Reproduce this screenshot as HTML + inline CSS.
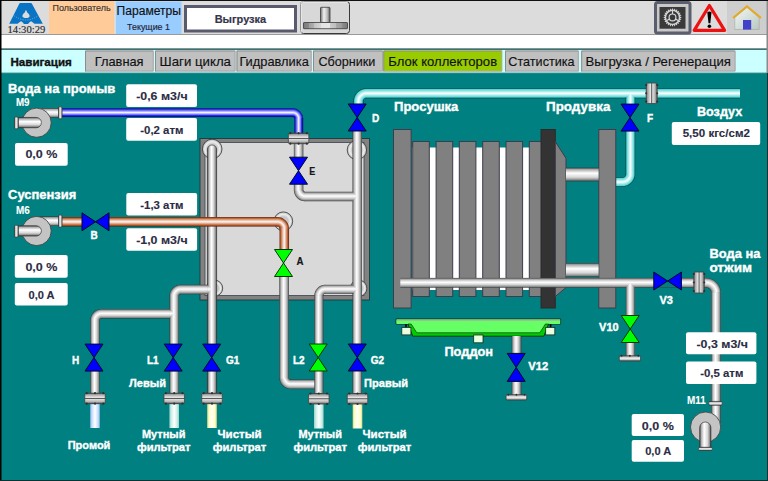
<!DOCTYPE html>
<html><head><meta charset="utf-8"><style>
html,body{margin:0;padding:0;width:768px;height:481px;overflow:hidden;background:#008080;}
svg{display:block;}

</style></head><body>
<svg width="768" height="481" viewBox="0 0 768 481" shape-rendering="geometricPrecision">
<defs><linearGradient id="cyl" x1="0" y1="0" x2="1" y2="0"><stop offset="0" stop-color="#707070"/><stop offset="0.35" stop-color="#f0f0f0"/><stop offset="0.7" stop-color="#c0c0c0"/><stop offset="1" stop-color="#606060"/></linearGradient><linearGradient id="base" x1="0" y1="0" x2="1" y2="0"><stop offset="0" stop-color="#7a7a7a"/><stop offset="0.12" stop-color="#8a8a8a"/><stop offset="0.12" stop-color="#a0a0a0"/><stop offset="0.25" stop-color="#b0b0b0"/><stop offset="0.25" stop-color="#c4c4c4"/><stop offset="0.4" stop-color="#d8d8d8"/><stop offset="0.4" stop-color="#e4e4e4"/><stop offset="0.6" stop-color="#e8e8e8"/><stop offset="0.6" stop-color="#cccccc"/><stop offset="0.75" stop-color="#bcbcbc"/><stop offset="0.75" stop-color="#a8a8a8"/><stop offset="0.88" stop-color="#9a9a9a"/><stop offset="0.88" stop-color="#8c8c8c"/><stop offset="1" stop-color="#7a7a7a"/></linearGradient><linearGradient id="house" x1="0" y1="0" x2="1" y2="1"><stop offset="0" stop-color="#f4f8f4"/><stop offset="1" stop-color="#b8c8c0"/></linearGradient><radialGradient id="g1" cx="0.5" cy="0.5" r="0.5"><stop offset="0.5" stop-color="#c8c8c8"/><stop offset="0.75" stop-color="#eeeeee"/><stop offset="1" stop-color="#b0b0b0"/></radialGradient><radialGradient id="g2" cx="0.5" cy="0.5" r="0.5"><stop offset="0.5" stop-color="#c8c8c8"/><stop offset="0.75" stop-color="#eeeeee"/><stop offset="1" stop-color="#b0b0b0"/></radialGradient><radialGradient id="g3" cx="0.5" cy="0.5" r="0.5"><stop offset="0.5" stop-color="#c8c8c8"/><stop offset="0.75" stop-color="#eeeeee"/><stop offset="1" stop-color="#b0b0b0"/></radialGradient><radialGradient id="g4" cx="0.5" cy="0.5" r="0.5"><stop offset="0.5" stop-color="#c8c8c8"/><stop offset="0.75" stop-color="#eeeeee"/><stop offset="1" stop-color="#b0b0b0"/></radialGradient><radialGradient id="g5" cx="0.5" cy="0.5" r="0.5"><stop offset="0.5" stop-color="#c8c8c8"/><stop offset="0.75" stop-color="#eeeeee"/><stop offset="1" stop-color="#b0b0b0"/></radialGradient><linearGradient id="g6" x1="0" y1="0" x2="1" y2="0"><stop offset="0" stop-color="#3c3c3c"/><stop offset="0.1" stop-color="#8c8c8c"/><stop offset="0.22" stop-color="#c8c8c8"/><stop offset="0.45" stop-color="#ffffff"/><stop offset="0.68" stop-color="#d4d4d4"/><stop offset="0.88" stop-color="#909090"/><stop offset="1" stop-color="#303838"/></linearGradient><linearGradient id="g7" x1="0" y1="0" x2="0" y2="1"><stop offset="0" stop-color="#3c3c3c"/><stop offset="0.1" stop-color="#8c8c8c"/><stop offset="0.22" stop-color="#c8c8c8"/><stop offset="0.45" stop-color="#ffffff"/><stop offset="0.68" stop-color="#d4d4d4"/><stop offset="0.88" stop-color="#909090"/><stop offset="1" stop-color="#303838"/></linearGradient><radialGradient id="g8" gradientUnits="userSpaceOnUse" cx="180.7" cy="296.0" r="11.25"><stop offset="0.1556" stop-color="#303838"/><stop offset="0.2569" stop-color="#909090"/><stop offset="0.4258" stop-color="#d4d4d4"/><stop offset="0.6200" stop-color="#ffffff"/><stop offset="0.8142" stop-color="#c8c8c8"/><stop offset="0.9156" stop-color="#8c8c8c"/><stop offset="1.0000" stop-color="#3c3c3c"/></radialGradient><radialGradient id="g9" gradientUnits="userSpaceOnUse" cx="101.5" cy="320.3" r="11.25"><stop offset="0.1556" stop-color="#303838"/><stop offset="0.2569" stop-color="#909090"/><stop offset="0.4258" stop-color="#d4d4d4"/><stop offset="0.6200" stop-color="#ffffff"/><stop offset="0.8142" stop-color="#c8c8c8"/><stop offset="0.9156" stop-color="#8c8c8c"/><stop offset="1.0000" stop-color="#3c3c3c"/></radialGradient><radialGradient id="g10" gradientUnits="userSpaceOnUse" cx="290.6" cy="377.8" r="11.3"><stop offset="0.1504" stop-color="#3c3c3c"/><stop offset="0.2354" stop-color="#8c8c8c"/><stop offset="0.3373" stop-color="#c8c8c8"/><stop offset="0.5327" stop-color="#ffffff"/><stop offset="0.7281" stop-color="#d4d4d4"/><stop offset="0.8981" stop-color="#909090"/><stop offset="1.0000" stop-color="#303838"/></radialGradient><radialGradient id="g11" gradientUnits="userSpaceOnUse" cx="325.3" cy="295.8" r="11.0"><stop offset="0.1818" stop-color="#303838"/><stop offset="0.2800" stop-color="#909090"/><stop offset="0.4436" stop-color="#d4d4d4"/><stop offset="0.6318" stop-color="#ffffff"/><stop offset="0.8200" stop-color="#c8c8c8"/><stop offset="0.9182" stop-color="#8c8c8c"/><stop offset="1.0000" stop-color="#3c3c3c"/></radialGradient><radialGradient id="g12" gradientUnits="userSpaceOnUse" cx="305.1" cy="190.0" r="11.25"><stop offset="0.1556" stop-color="#3c3c3c"/><stop offset="0.2400" stop-color="#8c8c8c"/><stop offset="0.3413" stop-color="#c8c8c8"/><stop offset="0.5356" stop-color="#ffffff"/><stop offset="0.7298" stop-color="#d4d4d4"/><stop offset="0.8987" stop-color="#909090"/><stop offset="1.0000" stop-color="#303838"/></radialGradient><linearGradient id="g13" x1="0" y1="0" x2="1" y2="0"><stop offset="0" stop-color="#90b8e8"/><stop offset="0.2" stop-color="#c8e0ff"/><stop offset="0.5" stop-color="#ffffff"/><stop offset="0.8" stop-color="#c8e0ff"/><stop offset="1" stop-color="#90b8e8"/></linearGradient><linearGradient id="g14" x1="0" y1="0" x2="1" y2="0"><stop offset="0" stop-color="#98d0c8"/><stop offset="0.2" stop-color="#cceee8"/><stop offset="0.5" stop-color="#ffffff"/><stop offset="0.8" stop-color="#cceee8"/><stop offset="1" stop-color="#98d0c8"/></linearGradient><linearGradient id="g15" x1="0" y1="0" x2="1" y2="0"><stop offset="0" stop-color="#d8d890"/><stop offset="0.2" stop-color="#ffffc0"/><stop offset="0.5" stop-color="#ffffff"/><stop offset="0.8" stop-color="#ffffc0"/><stop offset="1" stop-color="#d8d890"/></linearGradient><linearGradient id="g16" x1="0" y1="0" x2="0" y2="1"><stop offset="0" stop-color="#505050"/><stop offset="0.12" stop-color="#a0a0a0"/><stop offset="0.45" stop-color="#f4f4f4"/><stop offset="0.8" stop-color="#b8b8b8"/><stop offset="1" stop-color="#505050"/></linearGradient><radialGradient id="g17" gradientUnits="userSpaceOnUse" cx="292.7" cy="118.6" r="10.5"><stop offset="0.1429" stop-color="#00105a"/><stop offset="0.2629" stop-color="#1010d8"/><stop offset="0.4000" stop-color="#8080ff"/><stop offset="0.5714" stop-color="#f8f8ff"/><stop offset="0.7429" stop-color="#8888ff"/><stop offset="0.8971" stop-color="#2020e8"/><stop offset="1.0000" stop-color="#0a2848"/></radialGradient><linearGradient id="g18" x1="0" y1="0" x2="0" y2="1"><stop offset="0" stop-color="#0a2848"/><stop offset="0.12" stop-color="#2020e8"/><stop offset="0.3" stop-color="#8888ff"/><stop offset="0.5" stop-color="#f8f8ff"/><stop offset="0.7" stop-color="#8080ff"/><stop offset="0.86" stop-color="#1010d8"/><stop offset="1" stop-color="#00105a"/></linearGradient><linearGradient id="g19" x1="0" y1="0" x2="1" y2="0"><stop offset="0" stop-color="#0a2848"/><stop offset="0.12" stop-color="#2020e8"/><stop offset="0.3" stop-color="#8888ff"/><stop offset="0.5" stop-color="#f8f8ff"/><stop offset="0.7" stop-color="#8080ff"/><stop offset="0.86" stop-color="#1010d8"/><stop offset="1" stop-color="#00105a"/></linearGradient><radialGradient id="g20" gradientUnits="userSpaceOnUse" cx="277.3" cy="228.8" r="11.75"><stop offset="0.1915" stop-color="#50200a"/><stop offset="0.3047" stop-color="#b8582a"/><stop offset="0.4340" stop-color="#dca080"/><stop offset="0.5957" stop-color="#fcf8f4"/><stop offset="0.7574" stop-color="#e0b098"/><stop offset="0.9030" stop-color="#b85a2a"/><stop offset="1.0000" stop-color="#5a2008"/></radialGradient><linearGradient id="g21" x1="0" y1="0" x2="0" y2="1"><stop offset="0" stop-color="#5a2008"/><stop offset="0.12" stop-color="#b85a2a"/><stop offset="0.3" stop-color="#e0b098"/><stop offset="0.5" stop-color="#fcf8f4"/><stop offset="0.7" stop-color="#dca080"/><stop offset="0.86" stop-color="#b8582a"/><stop offset="1" stop-color="#50200a"/></linearGradient><linearGradient id="g22" x1="0" y1="0" x2="1" y2="0"><stop offset="0" stop-color="#5a2008"/><stop offset="0.12" stop-color="#b85a2a"/><stop offset="0.3" stop-color="#e0b098"/><stop offset="0.5" stop-color="#fcf8f4"/><stop offset="0.7" stop-color="#dca080"/><stop offset="0.86" stop-color="#b8582a"/><stop offset="1" stop-color="#50200a"/></linearGradient><radialGradient id="g23" gradientUnits="userSpaceOnUse" cx="366.4" cy="101.3" r="13.0"><stop offset="0.2308" stop-color="#0a3a3a"/><stop offset="0.3231" stop-color="#55d8d8"/><stop offset="0.6154" stop-color="#ffffff"/><stop offset="0.9077" stop-color="#55d8d8"/><stop offset="1.0000" stop-color="#0a3a3a"/></radialGradient><linearGradient id="g24" x1="0" y1="0" x2="1" y2="0"><stop offset="0" stop-color="#0a3a3a"/><stop offset="0.12" stop-color="#55d8d8"/><stop offset="0.5" stop-color="#ffffff"/><stop offset="0.88" stop-color="#55d8d8"/><stop offset="1" stop-color="#0a3a3a"/></linearGradient><linearGradient id="g25" x1="0" y1="0" x2="0" y2="1"><stop offset="0" stop-color="#0a3a3a"/><stop offset="0.12" stop-color="#55d8d8"/><stop offset="0.5" stop-color="#ffffff"/><stop offset="0.88" stop-color="#55d8d8"/><stop offset="1" stop-color="#0a3a3a"/></linearGradient><radialGradient id="g26" gradientUnits="userSpaceOnUse" cx="622.4" cy="174.0" r="12.75"><stop offset="0.2549" stop-color="#0a3a3a"/><stop offset="0.3443" stop-color="#55d8d8"/><stop offset="0.6275" stop-color="#ffffff"/><stop offset="0.9106" stop-color="#55d8d8"/><stop offset="1.0000" stop-color="#0a3a3a"/></radialGradient><linearGradient id="g27" x1="0" y1="0" x2="1" y2="0"><stop offset="0" stop-color="#505050"/><stop offset="0.12" stop-color="#a0a0a0"/><stop offset="0.45" stop-color="#f4f4f4"/><stop offset="0.8" stop-color="#b8b8b8"/><stop offset="1" stop-color="#505050"/></linearGradient><linearGradient id="g28" x1="0" y1="0" x2="0" y2="1"><stop offset="0" stop-color="#303030"/><stop offset="0.12" stop-color="#a8a8a8"/><stop offset="0.4" stop-color="#ffffff"/><stop offset="0.7" stop-color="#d8d8d8"/><stop offset="0.9" stop-color="#888888"/><stop offset="1" stop-color="#303030"/></linearGradient><radialGradient id="g29" gradientUnits="userSpaceOnUse" cx="706.0" cy="292.8" r="14.9"><stop offset="0.3423" stop-color="#303838"/><stop offset="0.4212" stop-color="#909090"/><stop offset="0.5528" stop-color="#d4d4d4"/><stop offset="0.7040" stop-color="#ffffff"/><stop offset="0.8553" stop-color="#c8c8c8"/><stop offset="0.9342" stop-color="#8c8c8c"/><stop offset="1.0000" stop-color="#3c3c3c"/></radialGradient><linearGradient id="g30" x1="0" y1="0" x2="1" y2="0"><stop offset="0" stop-color="#303030"/><stop offset="0.12" stop-color="#a8a8a8"/><stop offset="0.4" stop-color="#ffffff"/><stop offset="0.7" stop-color="#d8d8d8"/><stop offset="0.9" stop-color="#888888"/><stop offset="1" stop-color="#303030"/></linearGradient></defs>
<rect x="0" y="0" width="768" height="481" fill="#008080" />
<rect x="0" y="0" width="768" height="35" fill="#dcdcdc" />
<rect x="0" y="0" width="768" height="1" fill="#101010" />
<rect x="0" y="34" width="768" height="1.2" fill="#9a9a9a" />
<rect x="0" y="35" width="768" height="13.5" fill="#ffffff" />
<rect x="0" y="48" width="768" height="1" fill="#909090" />
<rect x="0" y="49" width="768" height="1" fill="#2a7a7a" />
<rect x="0" y="50" width="768" height="23" fill="#ccffff" />
<rect x="0" y="72.5" width="768" height="0.8" fill="#5a9a9a" />
<rect x="49" y="1" width="65" height="33" fill="#ffcc99" />
<text x="52.5" y="10.75" style="font-family:'Liberation Sans'" font-size="9.6" font-weight="normal" fill="#3a3030" stroke="#3a3030" stroke-width="0.15" textLength="58.1" lengthAdjust="spacingAndGlyphs" text-anchor="start">Пользователь</text>
<rect x="116" y="1.5" width="65.5" height="32.5" fill="#99ccff" />
<text x="116.6" y="14.7" style="font-family:'Liberation Sans'" font-size="12" font-weight="normal" fill="#111111" stroke="#111111" stroke-width="0.15" textLength="64.4" lengthAdjust="spacingAndGlyphs" text-anchor="start">Параметры</text>
<text x="127" y="30.4" style="font-family:'Liberation Sans'" font-size="9.6" font-weight="normal" fill="#222233" stroke="#222233" stroke-width="0.15" textLength="43" lengthAdjust="spacingAndGlyphs" text-anchor="start">Текущие 1</text>
<rect x="185.5" y="6.5" width="110" height="24.5" fill="#ffffff" stroke="#5a5a6e" stroke-width="3" />
<text x="214.7" y="22.9" style="font-family:'Liberation Sans'" font-size="11.8" font-weight="bold" fill="#36364c" stroke="#36364c" stroke-width="0.2" textLength="51.5" lengthAdjust="spacingAndGlyphs" text-anchor="start">Выгрузка</text>
<rect x="300.5" y="1.5" width="49" height="32" rx="3" fill="#d8d8d8" stroke="#3a3a3a" stroke-width="1"/>
<path d="M301,33 L301,3 Q301,2 303,2 L348,2" stroke="#f4f4f4" stroke-width="1" fill="none"/>
<rect x="320.5" y="7.3" width="9.5" height="15.2" rx="0.8" fill="url(#cyl)" stroke="#3a3a3a" stroke-width="0.8"/>
<rect x="303.5" y="22.5" width="44" height="6.2" rx="0.6" fill="url(#base)" stroke="#3a3a3a" stroke-width="0.8"/>
<rect x="655.5" y="2.5" width="34.5" height="30.5" fill="#c8c8c8" stroke="#5b5e6e" stroke-width="3" rx="2" />
<rect x="659.5" y="7" width="26" height="21.7" fill="#3a3a3a" />
<polygon points="672.50,8.10 673.48,9.96 674.91,8.42 675.37,10.47 677.15,9.35 677.07,11.45 679.08,10.82 678.45,12.83 680.55,12.75 679.43,14.53 681.48,14.99 679.94,16.42 681.80,17.40 679.94,18.38 681.48,19.81 679.43,20.27 680.55,22.05 678.45,21.97 679.08,23.98 677.07,23.35 677.15,25.45 675.37,24.33 674.91,26.38 673.48,24.84 672.50,26.70 671.52,24.84 670.09,26.38 669.63,24.33 667.85,25.45 667.93,23.35 665.92,23.98 666.55,21.97 664.45,22.05 665.57,20.27 663.52,19.81 665.06,18.38 663.20,17.40 665.06,16.42 663.52,14.99 665.57,14.53 664.45,12.75 666.55,12.83 665.92,10.82 667.93,11.45 667.85,9.35 669.63,10.47 670.09,8.42 671.52,9.96" fill="#d4d4d4"/>
<circle cx="672.5" cy="17.4" r="6.3" fill="#3a3a3a"/>
<circle cx="672.5" cy="17.4" r="3.4" fill="none" stroke="#dadada" stroke-width="1.2"/>
<path d="M672.5,11 V14 M666.9,20.6 L669.6,19.1 M678.1,20.6 L675.4,19.1" stroke="#dadada" stroke-width="1.1"/>
<path d="M709.4,5.5 L724.6,30.3 L694.2,30.3 Z" fill="#dcdcdc" stroke="#ee1111" stroke-width="3.2" stroke-linejoin="round"/>
<path d="M707.3,12.2 Q709.4,10.6 711.5,12.2 L710.3,23.2 L708.5,23.2 Z" fill="#000"/><circle cx="709.4" cy="26.3" r="1.8" fill="#000"/>
<rect x="727" y="1" width="39.5" height="33" fill="#cecece" />
<rect x="766.5" y="1" width="1.5" height="72" fill="#8a8a8a" />
<path d="M734.8,17.5 L747,7.5 L759.2,17.5 L759.2,29.5 L734.8,29.5 Z" fill="url(#house)" stroke="#a0a8a0" stroke-width="0.6"/>
<path d="M733,18 L747,6.2 L761,18" fill="none" stroke="#e8a820" stroke-width="2"/>
<rect x="743" y="20" width="8.2" height="9.6" fill="#4040c8" />
<path d="M20.3,3 L30.9,3 Q31.5,3 31.8,3.6 L42.8,23.8 L34.4,23.8 L31.7,21.5 L30.2,21.5 L28,24.1 L24,24.1 L21.8,21.5 L20.3,21.5 L17.6,23.8 L9.2,23.8 L19.4,3.6 Q19.7,3 20.3,3 Z" fill="#0a74c4"/>
<path d="M26,10.3 C26.6,10.3 26.8,11.8 27.2,12.6 C28.6,13.6 29.6,14.8 29.6,16.2 C29.6,17.6 28,17.9 26,17.9 C24,17.9 22.4,17.6 22.4,16.2 C22.4,14.8 23.4,13.6 24.8,12.6 C25.2,11.8 25.4,10.3 26,10.3 Z" fill="#dcdcdc"/>
<path d="M13.8,15.5 Q26,24.5 38.4,15.5" fill="none" stroke="#9cc4e4" stroke-width="0.6" stroke-dasharray="1.2,1.2"/>
<text x="7.5" y="32.9" style="font-family:'Liberation Serif'" font-size="9.9" font-weight="normal" fill="#2a2a2a" stroke="#2a2a2a" stroke-width="0.15" textLength="37.8" lengthAdjust="spacingAndGlyphs" text-anchor="start">14:30:29</text>
<rect x="0" y="0" width="1.5" height="481" fill="#000000" />
<text x="10.4" y="65.5" style="font-family:'Liberation Sans'" font-size="11.6" font-weight="bold" fill="#111111" stroke="#111111" stroke-width="0.35" textLength="61.5" lengthAdjust="spacingAndGlyphs" text-anchor="start">Навигация</text>
<rect x="85" y="50.5" width="68.69999999999999" height="21" fill="#c0c0c0" />
<path d="M85.5,71.5 V51 H153.2" stroke="#8c8c8c" stroke-width="1" fill="none"/>
<path d="M153.2,51 V71 H85.5" stroke="#a8a8a8" stroke-width="1" fill="none"/>
<text x="94.7" y="66.2" style="font-family:'Liberation Sans'" font-size="13.2" font-weight="normal" fill="#111111" stroke="#111111" stroke-width="0.15" textLength="48.9" lengthAdjust="spacingAndGlyphs" text-anchor="start">Главная</text>
<rect x="155" y="50.5" width="80.5" height="21" fill="#c0c0c0" />
<path d="M155.5,71.5 V51 H235.0" stroke="#8c8c8c" stroke-width="1" fill="none"/>
<path d="M235.0,51 V71 H155.5" stroke="#a8a8a8" stroke-width="1" fill="none"/>
<text x="159.6" y="66.2" style="font-family:'Liberation Sans'" font-size="13.2" font-weight="normal" fill="#111111" stroke="#111111" stroke-width="0.15" textLength="71.4" lengthAdjust="spacingAndGlyphs" text-anchor="start">Шаги цикла</text>
<rect x="236.5" y="50.5" width="75.19999999999999" height="21" fill="#c0c0c0" />
<path d="M237.0,71.5 V51 H311.2" stroke="#8c8c8c" stroke-width="1" fill="none"/>
<path d="M311.2,51 V71 H237.0" stroke="#a8a8a8" stroke-width="1" fill="none"/>
<text x="239.4" y="66.2" style="font-family:'Liberation Sans'" font-size="13.2" font-weight="normal" fill="#111111" stroke="#111111" stroke-width="0.15" textLength="69.4" lengthAdjust="spacingAndGlyphs" text-anchor="start">Гидравлика</text>
<rect x="313" y="50.5" width="70" height="21" fill="#c0c0c0" />
<path d="M313.5,71.5 V51 H382.5" stroke="#8c8c8c" stroke-width="1" fill="none"/>
<path d="M382.5,51 V71 H313.5" stroke="#a8a8a8" stroke-width="1" fill="none"/>
<text x="318.5" y="66.2" style="font-family:'Liberation Sans'" font-size="13.2" font-weight="normal" fill="#111111" stroke="#111111" stroke-width="0.15" textLength="56.9" lengthAdjust="spacingAndGlyphs" text-anchor="start">Сборники</text>
<rect x="383.3" y="50.5" width="118.89999999999998" height="21" fill="#99cc00" />
<path d="M383.8,71.5 V51 H501.7" stroke="#8c8c8c" stroke-width="1" fill="none"/>
<path d="M501.7,51 V71 H383.8" stroke="#a8a8a8" stroke-width="1" fill="none"/>
<text x="388.3" y="66.2" style="font-family:'Liberation Sans'" font-size="13.2" font-weight="normal" fill="#111111" stroke="#111111" stroke-width="0.15" textLength="108.8" lengthAdjust="spacingAndGlyphs" text-anchor="start">Блок коллекторов</text>
<rect x="505" y="50.5" width="73.79999999999995" height="21" fill="#c0c0c0" />
<path d="M505.5,71.5 V51 H578.3" stroke="#8c8c8c" stroke-width="1" fill="none"/>
<path d="M578.3,51 V71 H505.5" stroke="#a8a8a8" stroke-width="1" fill="none"/>
<text x="508.3" y="66.2" style="font-family:'Liberation Sans'" font-size="13.2" font-weight="normal" fill="#111111" stroke="#111111" stroke-width="0.15" textLength="66.3" lengthAdjust="spacingAndGlyphs" text-anchor="start">Статистика</text>
<rect x="581.2" y="50.5" width="154.29999999999995" height="21" fill="#c0c0c0" />
<path d="M581.7,71.5 V51 H735.0" stroke="#8c8c8c" stroke-width="1" fill="none"/>
<path d="M735.0,51 V71 H581.7" stroke="#a8a8a8" stroke-width="1" fill="none"/>
<text x="585.4" y="66.2" style="font-family:'Liberation Sans'" font-size="13.2" font-weight="normal" fill="#111111" stroke="#111111" stroke-width="0.15" textLength="145.5" lengthAdjust="spacingAndGlyphs" text-anchor="start">Выгрузка / Регенерация</text>
<rect x="767" y="73" width="1" height="408" fill="#0a3030" />
<rect x="0" y="480" width="768" height="1" fill="#0a3030" />
<rect x="200" y="138.5" width="169.5" height="161.5" fill="#828282" stroke="#203a3a" stroke-width="0.9" />
<rect x="205" y="142.5" width="159" height="153" fill="#d9d9d9" stroke="#4a4e58" stroke-width="0.9" />
<circle cx="212.2" cy="149" r="9.8" fill="url(#g1)" stroke="#383838" stroke-width="0.8"/>
<circle cx="356.9" cy="150" r="9.7" fill="url(#g2)" stroke="#383838" stroke-width="0.8"/>
<circle cx="214.6" cy="288.2" r="8.1" fill="url(#g3)" stroke="#383838" stroke-width="0.8"/>
<circle cx="358.6" cy="288.3" r="8.3" fill="url(#g4)" stroke="#383838" stroke-width="0.8"/>
<circle cx="283.3" cy="221.3" r="9.4" fill="url(#g5)" stroke="#383838" stroke-width="0.8"/>
<path d="M207.4,393.5 L207.4,149.6 A4.6,4.6 0 0 1 216.6,149.6 L216.6,393.5 Z" fill="url(#g6)" stroke="#3a3a3a" stroke-width="0.7"/>
<rect x="352.5" y="131" width="9.4" height="262" fill="url(#g6)"/>
<path d="M212,289.5 L207.25,284.75 L207.25,294.25 Z" fill="url(#g7)"/>
<path d="M180.70,284.75 A11.25,11.25 0 0 0 169.45,296.00 L178.95,296.00 A1.75,1.75 0 0 1 180.70,294.25 Z" fill="url(#g8)"/>
<rect x="180.1" y="284.75" width="27.650000000000006" height="9.5" fill="url(#g7)"/>
<rect x="169.45" y="295.4" width="9.5" height="97.60000000000002" fill="url(#g6)"/>
<path d="M174.2,313.8 L169.45,309.05 L169.45,318.55 Z" fill="url(#g7)"/>
<path d="M101.50,309.05 A11.25,11.25 0 0 0 90.25,320.30 L99.75,320.30 A1.75,1.75 0 0 1 101.50,318.55 Z" fill="url(#g9)"/>
<rect x="100.9" y="309.05" width="69.04999999999998" height="9.5" fill="url(#g7)"/>
<rect x="90.25" y="319.7" width="9.5" height="73.30000000000001" fill="url(#g6)"/>
<path d="M318.8,384.3 L314.0,379.5 L314.0,389.1 Z" fill="url(#g7)"/>
<path d="M279.30,377.80 A11.3,11.3 0 0 0 290.60,389.10 L290.60,379.50 A1.7000000000000002,1.7000000000000002 0 0 1 288.90,377.80 Z" fill="url(#g10)"/>
<rect x="279.3" y="276" width="9.6" height="102.40000000000003" fill="url(#g6)"/>
<rect x="290.0" y="379.5" width="24.5" height="9.6" fill="url(#g7)"/>
<path d="M357.2,289.3 L352.7,284.8 L352.7,293.8 Z" fill="url(#g7)"/>
<path d="M325.30,284.80 A11.0,11.0 0 0 0 314.30,295.80 L323.30,295.80 A2.0,2.0 0 0 1 325.30,293.80 Z" fill="url(#g11)"/>
<rect x="324.7" y="284.8" width="28.5" height="9" fill="url(#g7)"/>
<rect x="314.3" y="295.2" width="9" height="97.80000000000001" fill="url(#g6)"/>
<path d="M357.2,196.5 L352.45,191.75 L352.45,201.25 Z" fill="url(#g7)"/>
<path d="M293.85,190.00 A11.25,11.25 0 0 0 305.10,201.25 L305.10,191.75 A1.75,1.75 0 0 1 303.35,190.00 Z" fill="url(#g12)"/>
<rect x="293.85" y="140" width="9.5" height="50.599999999999994" fill="url(#g6)"/>
<rect x="304.5" y="191.75" width="48.44999999999999" height="9.5" fill="url(#g7)"/>
<rect x="90.2" y="403.7" width="9.6" height="24.30000000000001" fill="url(#g13)"/>
<rect x="169.39999999999998" y="403.7" width="9.6" height="24.30000000000001" fill="url(#g14)"/>
<rect x="207.2" y="403.7" width="9.6" height="24.30000000000001" fill="url(#g15)"/>
<rect x="314.0" y="404" width="9.6" height="24.5" fill="url(#g14)"/>
<rect x="352.7" y="404" width="9.6" height="24.5" fill="url(#g15)"/>
<rect x="84.75" y="393.2" width="20.5" height="10.5" rx="1.5" fill="url(#g16)" stroke="#404040" stroke-width="0.8"/>
<line x1="84.75" y1="398.45" x2="105.25" y2="398.45" stroke="#404040" stroke-width="0.9"/>
<circle cx="86.75" cy="393.2" r="1.1" fill="#303030"/><circle cx="86.75" cy="403.7" r="1.1" fill="#303030"/>
<circle cx="95" cy="393.2" r="1.1" fill="#303030"/><circle cx="95" cy="403.7" r="1.1" fill="#303030"/>
<circle cx="103.25" cy="393.2" r="1.1" fill="#303030"/><circle cx="103.25" cy="403.7" r="1.1" fill="#303030"/>
<rect x="163.95" y="393.2" width="20.5" height="10.5" rx="1.5" fill="url(#g16)" stroke="#404040" stroke-width="0.8"/>
<line x1="163.95" y1="398.45" x2="184.45" y2="398.45" stroke="#404040" stroke-width="0.9"/>
<circle cx="165.95" cy="393.2" r="1.1" fill="#303030"/><circle cx="165.95" cy="403.7" r="1.1" fill="#303030"/>
<circle cx="174.2" cy="393.2" r="1.1" fill="#303030"/><circle cx="174.2" cy="403.7" r="1.1" fill="#303030"/>
<circle cx="182.45" cy="393.2" r="1.1" fill="#303030"/><circle cx="182.45" cy="403.7" r="1.1" fill="#303030"/>
<rect x="201.75" y="393.2" width="20.5" height="10.5" rx="1.5" fill="url(#g16)" stroke="#404040" stroke-width="0.8"/>
<line x1="201.75" y1="398.45" x2="222.25" y2="398.45" stroke="#404040" stroke-width="0.9"/>
<circle cx="203.75" cy="393.2" r="1.1" fill="#303030"/><circle cx="203.75" cy="403.7" r="1.1" fill="#303030"/>
<circle cx="212" cy="393.2" r="1.1" fill="#303030"/><circle cx="212" cy="403.7" r="1.1" fill="#303030"/>
<circle cx="220.25" cy="393.2" r="1.1" fill="#303030"/><circle cx="220.25" cy="403.7" r="1.1" fill="#303030"/>
<rect x="308.55" y="393.5" width="20.5" height="10.5" rx="1.5" fill="url(#g16)" stroke="#404040" stroke-width="0.8"/>
<line x1="308.55" y1="398.75" x2="329.05" y2="398.75" stroke="#404040" stroke-width="0.9"/>
<circle cx="310.55" cy="393.5" r="1.1" fill="#303030"/><circle cx="310.55" cy="404.0" r="1.1" fill="#303030"/>
<circle cx="318.8" cy="393.5" r="1.1" fill="#303030"/><circle cx="318.8" cy="404.0" r="1.1" fill="#303030"/>
<circle cx="327.05" cy="393.5" r="1.1" fill="#303030"/><circle cx="327.05" cy="404.0" r="1.1" fill="#303030"/>
<rect x="347.25" y="393.5" width="20.5" height="10.5" rx="1.5" fill="url(#g16)" stroke="#404040" stroke-width="0.8"/>
<line x1="347.25" y1="398.75" x2="367.75" y2="398.75" stroke="#404040" stroke-width="0.9"/>
<circle cx="349.25" cy="393.5" r="1.1" fill="#303030"/><circle cx="349.25" cy="404.0" r="1.1" fill="#303030"/>
<circle cx="357.5" cy="393.5" r="1.1" fill="#303030"/><circle cx="357.5" cy="404.0" r="1.1" fill="#303030"/>
<circle cx="365.75" cy="393.5" r="1.1" fill="#303030"/><circle cx="365.75" cy="404.0" r="1.1" fill="#303030"/>
<path d="M292.70,108.10 A10.5,10.5 0 0 1 303.20,118.60 L294.20,118.60 A1.5,1.5 0 0 0 292.70,117.10 Z" fill="url(#g17)"/>
<rect x="61" y="108.1" width="232.3" height="9" fill="url(#g18)"/>
<rect x="294.2" y="118.0" width="9" height="16.0" fill="url(#g19)"/>
<rect x="288.35" y="133.2" width="20.5" height="10.5" rx="1.5" fill="url(#g16)" stroke="#404040" stroke-width="0.8"/>
<line x1="288.35" y1="138.45" x2="308.85" y2="138.45" stroke="#404040" stroke-width="0.9"/>
<circle cx="290.35" cy="133.2" r="1.1" fill="#303030"/><circle cx="290.35" cy="143.7" r="1.1" fill="#303030"/>
<circle cx="298.6" cy="133.2" r="1.1" fill="#303030"/><circle cx="298.6" cy="143.7" r="1.1" fill="#303030"/>
<circle cx="306.85" cy="133.2" r="1.1" fill="#303030"/><circle cx="306.85" cy="143.7" r="1.1" fill="#303030"/>
<path d="M277.30,217.05 A11.75,11.75 0 0 1 289.05,228.80 L279.55,228.80 A2.25,2.25 0 0 0 277.30,226.55 Z" fill="url(#g20)"/>
<rect x="61" y="217.05" width="216.90000000000003" height="9.5" fill="url(#g21)"/>
<rect x="279.55" y="228.20000000000002" width="9.5" height="20.799999999999983" fill="url(#g22)"/>
<path d="M353.40,101.30 A13.0,13.0 0 0 1 366.40,88.30 L366.40,98.30 A3.0,3.0 0 0 0 363.40,101.30 Z" fill="url(#g23)"/>
<rect x="353.4" y="100.7" width="10" height="3.299999999999997" fill="url(#g24)"/>
<rect x="365.79999999999995" y="88.3" width="374.20000000000005" height="10" fill="url(#g25)"/>
<path d="M630.4,93.3 L625.65,98.05 L635.15,98.05 Z" fill="url(#g24)"/>
<path d="M635.15,174.00 A12.75,12.75 0 0 1 622.40,186.75 L622.40,177.25 A3.25,3.25 0 0 0 625.65,174.00 Z" fill="url(#g26)"/>
<rect x="625.65" y="97.55" width="9.5" height="77.05" fill="url(#g24)"/>
<rect x="616" y="177.25" width="7.0" height="9.5" fill="url(#g25)"/>
<rect x="646.2" y="83.05" width="11" height="20.5" rx="1.5" fill="url(#g27)" stroke="#404040" stroke-width="0.8"/>
<line x1="651.7" y1="83.05" x2="651.7" y2="103.55" stroke="#404040" stroke-width="0.9"/>
<circle cx="646.2" cy="85.05" r="1.1" fill="#303030"/><circle cx="657.2" cy="85.05" r="1.1" fill="#303030"/>
<circle cx="646.2" cy="93.3" r="1.1" fill="#303030"/><circle cx="657.2" cy="93.3" r="1.1" fill="#303030"/>
<circle cx="646.2" cy="101.55" r="1.1" fill="#303030"/><circle cx="657.2" cy="101.55" r="1.1" fill="#303030"/>
<rect x="412" y="147.5" width="130" height="142.5" fill="#ffffff" />
<rect x="412.7" y="141.5" width="16.6" height="155" fill="#808080" stroke="#3c3c4c" stroke-width="1" />
<rect x="436.1" y="141.5" width="16.6" height="155" fill="#808080" stroke="#3c3c4c" stroke-width="1" />
<rect x="459.3" y="141.5" width="16.6" height="155" fill="#808080" stroke="#3c3c4c" stroke-width="1" />
<rect x="482.7" y="141.5" width="16.6" height="155" fill="#808080" stroke="#3c3c4c" stroke-width="1" />
<rect x="506.0" y="141.5" width="16.6" height="155" fill="#808080" stroke="#3c3c4c" stroke-width="1" />
<rect x="529.3" y="141.5" width="16.6" height="155" fill="#808080" stroke="#3c3c4c" stroke-width="1" />
<rect x="393.5" y="129.5" width="17.6" height="178.5" fill="#808080" stroke="#3c3c4c" stroke-width="1" />
<rect x="541" y="129.5" width="14.3" height="178.5" fill="#333333" stroke="#2a2a2a" stroke-width="1" />
<path d="M555.3,141.6 L566,158.3 L566,287.5 L555.3,296.6 Z" fill="#808080" stroke="#3c3c4c" stroke-width="1"/>
<rect x="598.8" y="129.5" width="17" height="178.5" fill="#808080" stroke="#3c3c4c" stroke-width="1" />
<rect x="566" y="167.7" width="32.60000000000002" height="13.6" fill="url(#g28)"/>
<rect x="566" y="263.0" width="32.60000000000002" height="14" fill="url(#g28)"/>
<path d="M706.00,277.90 A14.9,14.9 0 0 1 720.90,292.80 L711.10,292.80 A5.1,5.1 0 0 0 706.00,287.70 Z" fill="url(#g29)"/>
<rect x="400.3" y="277.90000000000003" width="306.3" height="9.8" fill="url(#g7)"/>
<rect x="711.1" y="292.2" width="9.8" height="109.80000000000001" fill="url(#g6)"/>
<path d="M630.4,282.8 L625.8,287.40000000000003 L635.0,287.40000000000003 Z" fill="url(#g6)"/>
<rect x="625.8" y="286.90000000000003" width="9.2" height="69.09999999999997" fill="url(#g6)"/>
<rect x="693.8" y="272.0" width="10.5" height="21" rx="1.5" fill="url(#g27)" stroke="#404040" stroke-width="0.8"/>
<line x1="699.05" y1="272.0" x2="699.05" y2="293.0" stroke="#404040" stroke-width="0.9"/>
<circle cx="693.8" cy="274.0" r="1.1" fill="#303030"/><circle cx="704.3" cy="274.0" r="1.1" fill="#303030"/>
<circle cx="693.8" cy="282.5" r="1.1" fill="#303030"/><circle cx="704.3" cy="282.5" r="1.1" fill="#303030"/>
<circle cx="693.8" cy="291.0" r="1.1" fill="#303030"/><circle cx="704.3" cy="291.0" r="1.1" fill="#303030"/>
<path d="M396,319 L560.6,319 L560.6,324 L548.6,324 L543.85,336.2 L412.75,336.2 L408,324 L396,324 Z" fill="#00cc00" stroke="#0a200a" stroke-width="0.8"/>
<path d="M396.4,320.6 L560.2,320.6 L560.2,324 L545.4,324 L539.8,332.75 L416.8,332.75 L411.2,324 L396.4,324 Z" fill="#66ff66"/>
<path d="M408,324 L411.2,324 L416.8,332.75 L539.8,332.75 L545.4,324 L548.6,324" fill="none" stroke="#0a200a" stroke-width="0.6"/>
<rect x="396.4" y="319.3" width="163.8" height="1.5" fill="#a8c0a0" />
<path d="M406,324 V328 M550.6,324 V328 M478.3,336 V335" stroke="#000" stroke-width="1.6"/>
<rect x="401.8" y="327.4" width="9.1" height="7.5" fill="#e8ffe0" stroke="#1a2a1a" stroke-width="0.8" />
<rect x="545.7" y="327.4" width="9.1" height="7.5" fill="#e8ffe0" stroke="#1a2a1a" stroke-width="0.8" />
<rect x="473.7" y="335" width="9.3" height="7.8" fill="#e8ffe0" stroke="#1a2a1a" stroke-width="0.8" />
<rect x="511.7" y="336" width="9.6" height="59" fill="url(#g6)"/>
<rect x="506.1" y="394.7" width="20.6" height="5.4" rx="1" fill="url(#g16)" stroke="#3a3a3a" stroke-width="0.7"/>
<circle cx="508.3" cy="394.7" r="1" fill="#303030"/>
<circle cx="516.4" cy="394.7" r="1" fill="#303030"/>
<circle cx="524.5" cy="394.7" r="1" fill="#303030"/>
<rect x="619.3" y="355.8" width="21.2" height="5.2" rx="1" fill="url(#g16)" stroke="#3a3a3a" stroke-width="0.7"/>
<circle cx="621.5" cy="355.8" r="1" fill="#303030"/>
<circle cx="629.9" cy="355.8" r="1" fill="#303030"/>
<circle cx="638.3" cy="355.8" r="1" fill="#303030"/>
<rect x="36.6" y="108.2" width="22.199999999999996" height="9.4" fill="url(#g28)"/>
<circle cx="36.6" cy="122.7" r="14.6" fill="#c4c4c4" stroke="#3a3a3a" stroke-width="0.8"/>
<rect x="58.5" y="106.8" width="3.6" height="12" rx="1.2" fill="url(#g27)" stroke="#3a3a3a" stroke-width="0.7"/>
<path d="M18.0,117.45 L36.25,117.45 A5.15,5.15 0 0 1 36.25,127.75000000000001 L18.0,127.75000000000001 Z" fill="url(#g28)" stroke="#3a3a3a" stroke-width="0.7"/>
<rect x="14.4" y="117.0" width="3.9" height="11.8" rx="1.2" fill="url(#g27)" stroke="#3a3a3a" stroke-width="0.7"/>
<rect x="36.6" y="216.5" width="22.199999999999996" height="9.4" fill="url(#g28)"/>
<circle cx="36.6" cy="231.0" r="14.6" fill="#c4c4c4" stroke="#3a3a3a" stroke-width="0.8"/>
<rect x="58.5" y="215.1" width="3.6" height="12" rx="1.2" fill="url(#g27)" stroke="#3a3a3a" stroke-width="0.7"/>
<path d="M18.0,225.75 L36.25,225.75 A5.15,5.15 0 0 1 36.25,236.05 L18.0,236.05 Z" fill="url(#g28)" stroke="#3a3a3a" stroke-width="0.7"/>
<rect x="14.4" y="225.3" width="3.9" height="11.8" rx="1.2" fill="url(#g27)" stroke="#3a3a3a" stroke-width="0.7"/>
<rect x="711.2" y="402" width="9.6" height="25" fill="url(#g6)"/>
<circle cx="705.6" cy="427.1" r="15.1" fill="#c4c4c4" stroke="#3a3a3a" stroke-width="0.8"/>
<rect x="708.8" y="401.4" width="13.4" height="3.9" rx="1.2" fill="url(#g16)" stroke="#3a3a3a" stroke-width="0.7"/>
<path d="M699.6999999999999,448 L699.6999999999999,427.6 A5.6,5.6 0 0 1 710.9,427.6 L710.9,448 Z" fill="url(#g30)" stroke="#3a3a3a" stroke-width="0.7"/>
<rect x="698.6" y="447.3" width="13.7" height="3.2" rx="1.2" fill="url(#g16)" stroke="#3a3a3a" stroke-width="0.7"/>
<rect x="82.5" y="215.8" width="26" height="12" fill="#008080"/>
<path d="M82,212.8 L82,230.8 L95.5,221.8 Z M95.5,221.8 L109,212.8 L109,230.8 Z" fill="#0000ff" stroke="#000828" stroke-width="1" stroke-linejoin="miter"/>
<rect x="292.5" y="157.7" width="12" height="26" fill="#d9d9d9"/>
<path d="M289.5,157.2 L307.5,157.2 L298.5,170.7 Z M298.5,170.7 L307.5,184.2 L289.5,184.2 Z" fill="#0000ff" stroke="#000828" stroke-width="1" stroke-linejoin="miter"/>
<rect x="351.2" y="104.5" width="12" height="26" fill="#008080"/>
<path d="M348.2,104 L366.2,104 L357.2,117.5 Z M357.2,117.5 L366.2,131 L348.2,131 Z" fill="#0000ff" stroke="#000828" stroke-width="1" stroke-linejoin="miter"/>
<rect x="624" y="104.6" width="12" height="26" fill="#008080"/>
<path d="M621.0,104.1 L639.0,104.1 L630,117.6 Z M630,117.6 L639.0,131.1 L621.0,131.1 Z" fill="#0000ff" stroke="#000828" stroke-width="1" stroke-linejoin="miter"/>
<rect x="277.5" y="250.0" width="12" height="26" fill="#d9d9d9"/>
<path d="M274.5,249.5 L292.5,249.5 L283.5,263.0 Z M283.5,263.0 L292.5,276.5 L274.5,276.5 Z" fill="#00ff00" stroke="#003a00" stroke-width="1" stroke-linejoin="miter"/>
<rect x="88" y="344.6" width="12" height="26" fill="#008080"/>
<path d="M85.0,344.1 L103.0,344.1 L94,357.6 Z M94,357.6 L103.0,371.1 L85.0,371.1 Z" fill="#0000ff" stroke="#000828" stroke-width="1" stroke-linejoin="miter"/>
<rect x="167.2" y="344.6" width="12" height="26" fill="#008080"/>
<path d="M164.2,344.1 L182.2,344.1 L173.2,357.6 Z M173.2,357.6 L182.2,371.1 L164.2,371.1 Z" fill="#0000ff" stroke="#000828" stroke-width="1" stroke-linejoin="miter"/>
<rect x="205.7" y="344.6" width="12" height="26" fill="#008080"/>
<path d="M202.7,344.1 L220.7,344.1 L211.7,357.6 Z M211.7,357.6 L220.7,371.1 L202.7,371.1 Z" fill="#0000ff" stroke="#000828" stroke-width="1" stroke-linejoin="miter"/>
<rect x="312.2" y="344.5" width="12" height="26" fill="#008080"/>
<path d="M309.2,344 L327.2,344 L318.2,357.5 Z M318.2,357.5 L327.2,371 L309.2,371 Z" fill="#00ff00" stroke="#003a00" stroke-width="1" stroke-linejoin="miter"/>
<rect x="351.3" y="344.5" width="12" height="26" fill="#008080"/>
<path d="M348.3,344 L366.3,344 L357.3,357.5 Z M357.3,357.5 L366.3,371 L348.3,371 Z" fill="#0000ff" stroke="#000828" stroke-width="1" stroke-linejoin="miter"/>
<rect x="510.20000000000005" y="353.9" width="12" height="27" fill="#008080"/>
<path d="M507.20000000000005,353.4 L525.2,353.4 L516.2,367.4 Z M516.2,367.4 L525.2,381.4 L507.20000000000005,381.4 Z" fill="#0000ff" stroke="#000828" stroke-width="1" stroke-linejoin="miter"/>
<rect x="624.2" y="316.0" width="12" height="26" fill="#008080"/>
<path d="M621.2,315.5 L639.2,315.5 L630.2,329.0 Z M630.2,329.0 L639.2,342.5 L621.2,342.5 Z" fill="#00ff00" stroke="#003a00" stroke-width="1" stroke-linejoin="miter"/>
<rect x="654.3" y="275" width="26.6" height="12" fill="#008080"/>
<path d="M653.8,272.0 L653.8,290.0 L667.5999999999999,281 Z M667.5999999999999,281 L681.4,272.0 L681.4,290.0 Z" fill="#0000ff" stroke="#000828" stroke-width="1" stroke-linejoin="miter"/>
<rect x="126.2" y="84.3" width="70.8" height="22.7" fill="#ffffff" rx="2" />
<text x="136.2" y="100.3" style="font-family:'Liberation Sans'" font-size="10.5" font-weight="bold" fill="#2c2c44" stroke="#2c2c44" stroke-width="0.12" textLength="51.4" lengthAdjust="spacingAndGlyphs" text-anchor="start">-0,6 м3/ч</text>
<rect x="126.2" y="118.1" width="70.8" height="22.7" fill="#ffffff" rx="2" />
<text x="140.3" y="133.8" style="font-family:'Liberation Sans'" font-size="10.5" font-weight="bold" fill="#2c2c44" stroke="#2c2c44" stroke-width="0.12" textLength="43.2" lengthAdjust="spacingAndGlyphs" text-anchor="start">-0,2 атм</text>
<rect x="15" y="143" width="52.7" height="22.8" fill="#ffffff" rx="2" />
<text x="25.4" y="158.4" style="font-family:'Liberation Sans'" font-size="10.5" font-weight="bold" fill="#2c2c44" stroke="#2c2c44" stroke-width="0.12" textLength="32" lengthAdjust="spacingAndGlyphs" text-anchor="start">0,0 %</text>
<rect x="126.3" y="193" width="70.8" height="22.5" fill="#ffffff" rx="2" />
<text x="140.3" y="209" style="font-family:'Liberation Sans'" font-size="10.5" font-weight="bold" fill="#2c2c44" stroke="#2c2c44" stroke-width="0.12" textLength="43.2" lengthAdjust="spacingAndGlyphs" text-anchor="start">-1,3 атм</text>
<rect x="126.3" y="228.3" width="70.8" height="22.4" fill="#ffffff" rx="2" />
<text x="136.2" y="244.3" style="font-family:'Liberation Sans'" font-size="10.5" font-weight="bold" fill="#2c2c44" stroke="#2c2c44" stroke-width="0.12" textLength="51.4" lengthAdjust="spacingAndGlyphs" text-anchor="start">-1,0 м3/ч</text>
<rect x="14.8" y="255.1" width="52.9" height="22.7" fill="#ffffff" rx="2" />
<text x="25.4" y="270.6" style="font-family:'Liberation Sans'" font-size="10.5" font-weight="bold" fill="#2c2c44" stroke="#2c2c44" stroke-width="0.12" textLength="32" lengthAdjust="spacingAndGlyphs" text-anchor="start">0,0 %</text>
<rect x="14.8" y="283" width="52.9" height="22.4" fill="#ffffff" rx="2" />
<text x="28.5" y="298.5" style="font-family:'Liberation Sans'" font-size="10.5" font-weight="bold" fill="#2c2c44" stroke="#2c2c44" stroke-width="0.12" textLength="26.1" lengthAdjust="spacingAndGlyphs" text-anchor="start">0,0 A</text>
<rect x="671.8" y="122" width="88.4" height="23" fill="#ffffff" rx="2" />
<text x="682.7" y="137.4" style="font-family:'Liberation Sans'" font-size="10.5" font-weight="bold" fill="#2c2c44" stroke="#2c2c44" stroke-width="0.12" textLength="67.2" lengthAdjust="spacingAndGlyphs" text-anchor="start">5,50 кгс/см2</text>
<rect x="686" y="332.3" width="70.4" height="22" fill="#ffffff" rx="2" />
<text x="696.5" y="348" style="font-family:'Liberation Sans'" font-size="10.5" font-weight="bold" fill="#2c2c44" stroke="#2c2c44" stroke-width="0.12" textLength="51.4" lengthAdjust="spacingAndGlyphs" text-anchor="start">-0,3 м3/ч</text>
<rect x="686" y="361.6" width="70.4" height="22.4" fill="#ffffff" rx="2" />
<text x="700.2" y="377.3" style="font-family:'Liberation Sans'" font-size="10.5" font-weight="bold" fill="#2c2c44" stroke="#2c2c44" stroke-width="0.12" textLength="43.2" lengthAdjust="spacingAndGlyphs" text-anchor="start">-0,5 атм</text>
<rect x="631.7" y="414" width="52.3" height="22" fill="#ffffff" rx="2" />
<text x="641.8" y="429.6" style="font-family:'Liberation Sans'" font-size="10.5" font-weight="bold" fill="#2c2c44" stroke="#2c2c44" stroke-width="0.12" textLength="32" lengthAdjust="spacingAndGlyphs" text-anchor="start">0,0 %</text>
<rect x="631.7" y="440" width="52.3" height="21.7" fill="#ffffff" rx="2" />
<text x="645.2" y="455.4" style="font-family:'Liberation Sans'" font-size="10.5" font-weight="bold" fill="#2c2c44" stroke="#2c2c44" stroke-width="0.12" textLength="26.1" lengthAdjust="spacingAndGlyphs" text-anchor="start">0,0 A</text>
<text x="8.1" y="92.9" style="font-family:'Liberation Sans'" font-size="12" font-weight="bold" fill="#fff" stroke="#fff" stroke-width="0.35" textLength="107.2" lengthAdjust="spacingAndGlyphs" text-anchor="start">Вода на промыв</text>
<text x="15.9" y="105.7" style="font-family:'Liberation Sans'" font-size="10.4" font-weight="bold" fill="#fff" stroke="#fff" stroke-width="0.1" textLength="13.6" lengthAdjust="spacingAndGlyphs" text-anchor="start">M9</text>
<text x="8.1" y="198.75" style="font-family:'Liberation Sans'" font-size="12.2" font-weight="bold" fill="#fff" stroke="#fff" stroke-width="0.35" textLength="68.2" lengthAdjust="spacingAndGlyphs" text-anchor="start">Суспензия</text>
<text x="15.9" y="214" style="font-family:'Liberation Sans'" font-size="10.4" font-weight="bold" fill="#fff" stroke="#fff" stroke-width="0.1" textLength="13.8" lengthAdjust="spacingAndGlyphs" text-anchor="start">M6</text>
<text x="90.6" y="239.4" style="font-family:'Liberation Sans'" font-size="10" font-weight="bold" fill="#fff" stroke="#fff" stroke-width="0.35" text-anchor="start">B</text>
<text x="309.3" y="174.8" style="font-family:'Liberation Sans'" font-size="11" font-weight="bold" fill="#161616" stroke="#161616" stroke-width="0.2" textLength="6" lengthAdjust="spacingAndGlyphs" text-anchor="start">E</text>
<text x="296.5" y="265" style="font-family:'Liberation Sans'" font-size="10.5" font-weight="bold" fill="#161616" stroke="#161616" stroke-width="0.2" textLength="7" lengthAdjust="spacingAndGlyphs" text-anchor="start">A</text>
<text x="371.9" y="121.9" style="font-family:'Liberation Sans'" font-size="10" font-weight="bold" fill="#fff" stroke="#fff" stroke-width="0.35" text-anchor="start">D</text>
<text x="647" y="122" style="font-family:'Liberation Sans'" font-size="10" font-weight="bold" fill="#fff" stroke="#fff" stroke-width="0.35" text-anchor="start">F</text>
<text x="394" y="110.6" style="font-family:'Liberation Sans'" font-size="12.4" font-weight="bold" fill="#fff" stroke="#fff" stroke-width="0.35" textLength="64.4" lengthAdjust="spacingAndGlyphs" text-anchor="start">Просушка</text>
<text x="546" y="110.6" style="font-family:'Liberation Sans'" font-size="12.4" font-weight="bold" fill="#fff" stroke="#fff" stroke-width="0.35" textLength="64.4" lengthAdjust="spacingAndGlyphs" text-anchor="start">Продувка</text>
<text x="697" y="115.5" style="font-family:'Liberation Sans'" font-size="12.4" font-weight="bold" fill="#fff" stroke="#fff" stroke-width="0.35" textLength="45.2" lengthAdjust="spacingAndGlyphs" text-anchor="start">Воздух</text>
<text x="709.4" y="257.5" style="font-family:'Liberation Sans'" font-size="12.4" font-weight="bold" fill="#fff" stroke="#fff" stroke-width="0.35" textLength="51" lengthAdjust="spacingAndGlyphs" text-anchor="start">Вода на</text>
<text x="709.4" y="272.4" style="font-family:'Liberation Sans'" font-size="12.4" font-weight="bold" fill="#fff" stroke="#fff" stroke-width="0.35" textLength="42.6" lengthAdjust="spacingAndGlyphs" text-anchor="start">отжим</text>
<text x="659.5" y="304.1" style="font-family:'Liberation Sans'" font-size="10" font-weight="bold" fill="#fff" stroke="#fff" stroke-width="0.35" textLength="13.4" lengthAdjust="spacingAndGlyphs" text-anchor="start">V3</text>
<text x="599.1" y="330.5" style="font-family:'Liberation Sans'" font-size="10" font-weight="bold" fill="#fff" stroke="#fff" stroke-width="0.35" textLength="19.5" lengthAdjust="spacingAndGlyphs" text-anchor="start">V10</text>
<text x="528.3" y="369.8" style="font-family:'Liberation Sans'" font-size="10.5" font-weight="bold" fill="#fff" stroke="#fff" stroke-width="0.35" textLength="19.9" lengthAdjust="spacingAndGlyphs" text-anchor="start">V12</text>
<text x="444.4" y="355.7" style="font-family:'Liberation Sans'" font-size="12.6" font-weight="bold" fill="#fff" stroke="#fff" stroke-width="0.35" textLength="48.7" lengthAdjust="spacingAndGlyphs" text-anchor="start">Поддон</text>
<text x="687.1" y="404" style="font-family:'Liberation Sans'" font-size="10.2" font-weight="bold" fill="#fff" stroke="#fff" stroke-width="0.1" textLength="18.7" lengthAdjust="spacingAndGlyphs" text-anchor="start">M11</text>
<text x="72" y="363.5" style="font-family:'Liberation Sans'" font-size="10" font-weight="bold" fill="#fff" stroke="#fff" stroke-width="0.35" text-anchor="start">H</text>
<text x="147" y="363.5" style="font-family:'Liberation Sans'" font-size="10" font-weight="bold" fill="#fff" stroke="#fff" stroke-width="0.35" text-anchor="start">L1</text>
<text x="226" y="363.5" style="font-family:'Liberation Sans'" font-size="10" font-weight="bold" fill="#fff" stroke="#fff" stroke-width="0.35" text-anchor="start">G1</text>
<text x="293" y="363.5" style="font-family:'Liberation Sans'" font-size="10" font-weight="bold" fill="#fff" stroke="#fff" stroke-width="0.35" text-anchor="start">L2</text>
<text x="370.8" y="363.5" style="font-family:'Liberation Sans'" font-size="10" font-weight="bold" fill="#fff" stroke="#fff" stroke-width="0.35" text-anchor="start">G2</text>
<text x="129" y="386.8" style="font-family:'Liberation Sans'" font-size="10.8" font-weight="bold" fill="#fff" stroke="#fff" stroke-width="0.35" textLength="37" lengthAdjust="spacingAndGlyphs" text-anchor="start">Левый</text>
<text x="364" y="386.8" style="font-family:'Liberation Sans'" font-size="10.8" font-weight="bold" fill="#fff" stroke="#fff" stroke-width="0.35" textLength="44" lengthAdjust="spacingAndGlyphs" text-anchor="start">Правый</text>
<text x="67.7" y="448.6" style="font-family:'Liberation Sans'" font-size="10.8" font-weight="bold" fill="#fff" stroke="#fff" stroke-width="0.35" textLength="42.7" lengthAdjust="spacingAndGlyphs" text-anchor="start">Промой</text>
<text x="142.0" y="437.8" style="font-family:'Liberation Sans'" font-size="11" font-weight="bold" fill="#fff" stroke="#fff" stroke-width="0.35" textLength="43.4" lengthAdjust="spacingAndGlyphs" text-anchor="start">Мутный</text>
<text x="136.89999999999998" y="450.6" style="font-family:'Liberation Sans'" font-size="11" font-weight="bold" fill="#fff" stroke="#fff" stroke-width="0.35" textLength="53.6" lengthAdjust="spacingAndGlyphs" text-anchor="start">фильтрат</text>
<text x="298.5" y="437.8" style="font-family:'Liberation Sans'" font-size="11" font-weight="bold" fill="#fff" stroke="#fff" stroke-width="0.35" textLength="43.4" lengthAdjust="spacingAndGlyphs" text-anchor="start">Мутный</text>
<text x="293.4" y="450.6" style="font-family:'Liberation Sans'" font-size="11" font-weight="bold" fill="#fff" stroke="#fff" stroke-width="0.35" textLength="53.6" lengthAdjust="spacingAndGlyphs" text-anchor="start">фильтрат</text>
<text x="217.5" y="437.8" style="font-family:'Liberation Sans'" font-size="11" font-weight="bold" fill="#fff" stroke="#fff" stroke-width="0.35" textLength="44" lengthAdjust="spacingAndGlyphs" text-anchor="start">Чистый</text>
<text x="212.7" y="450.6" style="font-family:'Liberation Sans'" font-size="11" font-weight="bold" fill="#fff" stroke="#fff" stroke-width="0.35" textLength="53.6" lengthAdjust="spacingAndGlyphs" text-anchor="start">фильтрат</text>
<text x="362.5" y="437.8" style="font-family:'Liberation Sans'" font-size="11" font-weight="bold" fill="#fff" stroke="#fff" stroke-width="0.35" textLength="44" lengthAdjust="spacingAndGlyphs" text-anchor="start">Чистый</text>
<text x="357.7" y="450.6" style="font-family:'Liberation Sans'" font-size="11" font-weight="bold" fill="#fff" stroke="#fff" stroke-width="0.35" textLength="53.6" lengthAdjust="spacingAndGlyphs" text-anchor="start">фильтрат</text>
</svg></body></html>
